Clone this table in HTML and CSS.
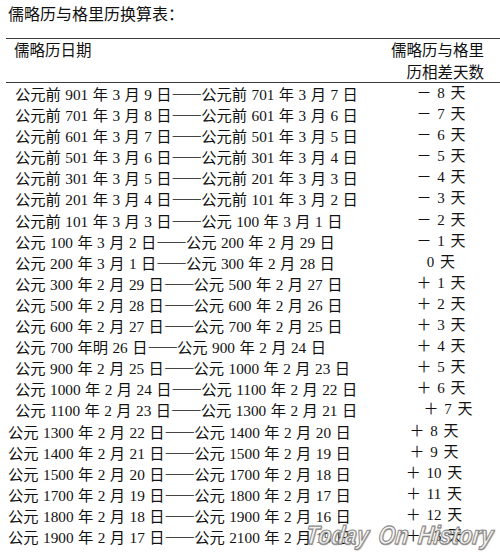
FILE: index.html
```html
<!DOCTYPE html>
<html lang="zh">
<head>
<meta charset="utf-8">
<title>儒略历与格里历换算表</title>
<link rel="stylesheet" href="styles.css">
</head>
<body>
<div class="page">
  <div class="title">儒略历与格里历换算表：</div>
  <div class="table">
    <div class="thead">
      <div class="th-left">儒略历日期</div>
      <div class="th-right">儒略历与格里<br>历相差天数</div>
    </div>
    <div class="row"><div class="c1">公元前 901 年 3 月 9 日<span class="dash">——</span>公元前 701 年 3 月 7 日</div><div class="c2">－ 8 天</div></div>
    <div class="row"><div class="c1">公元前 701 年 3 月 8 日<span class="dash">——</span>公元前 601 年 3 月 6 日</div><div class="c2">－ 7 天</div></div>
    <div class="row"><div class="c1">公元前 601 年 3 月 7 日<span class="dash">——</span>公元前 501 年 3 月 5 日</div><div class="c2">－ 6 天</div></div>
    <div class="row"><div class="c1">公元前 501 年 3 月 6 日<span class="dash">——</span>公元前 301 年 3 月 4 日</div><div class="c2">－ 5 天</div></div>
    <div class="row"><div class="c1">公元前 301 年 3 月 5 日<span class="dash">——</span>公元前 201 年 3 月 3 日</div><div class="c2">－ 4 天</div></div>
    <div class="row"><div class="c1">公元前 201 年 3 月 4 日<span class="dash">——</span>公元前 101 年 3 月 2 日</div><div class="c2">－ 3 天</div></div>
    <div class="row"><div class="c1">公元前 101 年 3 月 3 日<span class="dash">——</span>公元 100 年 3 月 1 日</div><div class="c2">－ 2 天</div></div>
    <div class="row"><div class="c1">公元 100 年 3 月 2 日<span class="dash">——</span>公元 200 年 2 月 29 日</div><div class="c2">－ 1 天</div></div>
    <div class="row"><div class="c1">公元 200 年 3 月 1 日<span class="dash">——</span>公元 300 年 2 月 28 日</div><div class="c2">0 天</div></div>
    <div class="row"><div class="c1">公元 300 年 2 月 29 日<span class="dash">——</span>公元 500 年 2 月 27 日</div><div class="c2">＋ 1 天</div></div>
    <div class="row"><div class="c1">公元 500 年 2 月 28 日<span class="dash">——</span>公元 600 年 2 月 26 日</div><div class="c2">＋ 2 天</div></div>
    <div class="row"><div class="c1">公元 600 年 2 月 27 日<span class="dash">——</span>公元 700 年 2 月 25 日</div><div class="c2">＋ 3 天</div></div>
    <div class="row"><div class="c1">公元 700 年明 26 日<span class="dash">——</span>公元 900 年 2 月 24 日</div><div class="c2">＋ 4 天</div></div>
    <div class="row"><div class="c1">公元 900 年 2 月 25 日<span class="dash">——</span>公元 1000 年 2 月 23 日</div><div class="c2">＋ 5 天</div></div>
    <div class="row"><div class="c1">公元 1000 年 2 月 24 日<span class="dash">——</span>公元 1100 年 2 月 22 日</div><div class="c2">＋ 6 天</div></div>
    <div class="row"><div class="c1">公元 1100 年 2 月 23 日<span class="dash">——</span>公元 1300 年 2 月 21 日</div><div class="c2 shift">＋ 7 天</div></div>
    <div class="row wide"><div class="c1">公元 1300 年 2 月 22 日<span class="dash">——</span>公元 1400 年 2 月 20 日</div><div class="c2">＋ 8 天</div></div>
    <div class="row wide"><div class="c1">公元 1400 年 2 月 21 日<span class="dash">——</span>公元 1500 年 2 月 19 日</div><div class="c2">＋ 9 天</div></div>
    <div class="row wide"><div class="c1">公元 1500 年 2 月 20 日<span class="dash">——</span>公元 1700 年 2 月 18 日</div><div class="c2">＋ 10 天</div></div>
    <div class="row wide"><div class="c1">公元 1700 年 2 月 19 日<span class="dash">——</span>公元 1800 年 2 月 17 日</div><div class="c2">＋ 11 天</div></div>
    <div class="row wide"><div class="c1">公元 1800 年 2 月 18 日<span class="dash">——</span>公元 1900 年 2 月 16 日</div><div class="c2">＋ 12 天</div></div>
    <div class="row wide"><div class="c1">公元 1900 年 2 月 17 日<span class="dash">——</span>公元 2100 年 2 月 15 日</div><div class="c2">＋ 13 天</div></div>
  </div>
  <div class="watermark">Today On History</div>
</div>
</body>
</html>
```

FILE: styles.css
```css
html, body {
  margin: 0;
  padding: 0;
  background: #ffffff;
}

.page {
  position: relative;
  width: 500px;
  height: 553px;
  overflow: hidden;
  font-family: "Liberation Serif", "Noto Sans CJK SC", serif;
  font-size: 15px;
  color: #111111;
}

.title {
  margin: 2px 0 14px 8px;
  font-family: "Noto Sans CJK SC", sans-serif;
  font-size: 16px;
  line-height: 22px;
  white-space: nowrap;
}

.table {
  margin-left: 6px;
  border-top: 1.5px solid #3a3a3a;
}

.thead {
  display: flex;
  justify-content: space-between;
  height: 43px;
  border-bottom: 1.5px solid #3a3a3a;
  font-family: "Noto Sans CJK SC", sans-serif;
  font-size: 15.5px;
  line-height: 21.5px;
}

.th-left {
  padding-left: 8px;
}

.th-right {
  width: 120px;
  padding-right: 16px;
  text-align: right;
}

.row {
  display: flex;
  height: 21.1px;
  line-height: 21.1px;
  white-space: nowrap;
  word-spacing: 0.6px;
}

.c1 {
  width: 376px;
  padding-left: 9px;
  font-size: 15.3px;
}

.row.wide .c1 {
  padding-left: 2px;
}

.c2 {
  width: 100px;
  text-align: center;
  word-spacing: 2px;
}

.c2.shift {
  padding-left: 14px;
  box-sizing: border-box;
}

.dash {
  font-family: "Noto Sans CJK SC", sans-serif;
  letter-spacing: -1px;
}

.watermark {
  position: absolute;
  left: 306px;
  top: 520px;
  font-family: "Liberation Sans", sans-serif;
  font-weight: bold;
  font-style: italic;
  font-size: 26px;
  line-height: 30px;
  letter-spacing: 0.3px;
  word-spacing: 4px;
  color: rgba(255, 255, 255, 0.9);
  -webkit-text-stroke: 1.2px #8a8a8a;
  text-shadow: 1px 1px 1px rgba(90, 90, 90, 0.6);
  transform: scaleX(0.82) skewX(-8deg);
  transform-origin: left center;
  white-space: nowrap;
}
```
